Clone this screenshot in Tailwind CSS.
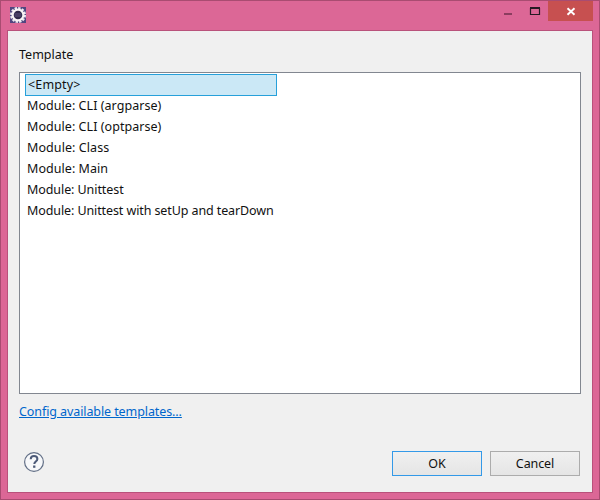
<!DOCTYPE html>
<html lang="en">
<head>
<meta charset="utf-8">
<title>Template</title>
<script src="https://cdn.jsdelivr.net/npm/@tailwindcss/browser@4"></script>
</head>
<body class="w-[600px] h-[500px] overflow-hidden font-['Noto_Sans','Open_Sans',sans-serif] text-[12.5px] text-[#111]">
<div class="w-[600px] h-[500px] bg-[#dc6796] border border-[#a94c71] flex flex-col px-[6px] pb-[6px]">
  <header class="h-[29px] shrink-0 flex items-start -mr-[6px]">
    <svg class="mt-[6px] ml-[3px]" width="16" height="16" viewBox="0 0 16 16">
      <rect width="16" height="16" fill="#51457f"/>
      <circle cx="8" cy="8" r="6.9" fill="none" stroke="#eeeaf0" stroke-width="2.2" stroke-dasharray="2.4 1.21"/>
      <circle cx="8" cy="8" r="5.4" fill="#302849" stroke="#f8f4f5" stroke-width="2.2"/>
      <path d="M4.5 7h7M4.5 9h7" stroke="#6c618d" stroke-width=".8"/>
    </svg>
    <div class="ml-auto flex">
      <svg width="56" height="20" viewBox="0 0 56 20">
        <path d="M12 13h8" stroke="#8b3d5f" stroke-width="2"/>
        <path d="M38.5 7v6.5h9V7" fill="none" stroke="#251a23" stroke-width="1.2"/>
        <path d="M38 7h10" stroke="#251a23" stroke-width="2"/>
      </svg>
      <div class="w-[45px] h-[20px] bg-[#c75050] mr-[6px]">
        <svg width="45" height="20" viewBox="0 0 45 20"><path d="M19.5 7.3l7 6.4M26.5 7.3l-7 6.4" stroke="#fff" stroke-width="1.9"/></svg>
      </div>
    </div>
  </header>
  <main class="flex-1 bg-[#f0f0f0] border border-[#b9527b] flex flex-col px-[11px]">
    <div class="h-[41px] pt-[15px] leading-[18px]">Template</div>
    <div class="h-[322px] shrink-0 bg-white border border-[#828790] pl-[5px] pt-px flex flex-col items-start whitespace-nowrap">
      <div class="w-[252px] h-[22px] border border-[#26a0da] bg-[#cbe8f6] pl-[2px] leading-[20px] tracking-[0.15px]">&lt;Empty&gt;</div>
      <div class="h-[21px] pl-[2px] leading-[20px] tracking-[0.05px]">Module: CLI (argparse)</div>
      <div class="h-[21px] pl-[2px] leading-[20px] tracking-[0.05px]">Module: CLI (optparse)</div>
      <div class="h-[21px] pl-[2px] leading-[20px] tracking-[0.08px]">Module: Class</div>
      <div class="h-[21px] pl-[2px] leading-[20px] tracking-[0.05px]">Module: Main</div>
      <div class="h-[21px] pl-[2px] leading-[20px] tracking-[-0.08px]">Module: Unittest</div>
      <div class="h-[21px] pl-[2px] leading-[20px] tracking-[-0.1px]">Module: Unittest with setUp and tearDown</div>
    </div>
    <a class="mt-[9px] leading-[18px] text-[#0066cc] underline self-start tracking-[-0.09px]">Config available templates...</a>
    <div class="mt-[30px] flex items-start">
      <svg class="ml-[4px]" width="22" height="22" viewBox="0 0 22 22">
        <circle cx="11" cy="11" r="9.4" fill="#f7f8fa" stroke="#626f86" stroke-width="1.2"/>
        <path d="M7.7 8.2C7.8 5.9 9.2 5 11 5c2 0 3.4 1.1 3.4 2.9 0 2.5-3.1 2.6-3.1 5" fill="none" stroke="#4d5a78" stroke-width="2"/>
        <rect x="10.1" y="14.5" width="2.3" height="2.3" fill="#4d5a78"/>
      </svg>
      <div class="ml-auto mr-px flex gap-[8px]">
        <button class="w-[90px] h-[25px] border border-[#3399e8] bg-linear-to-b from-[#f0f0f0] to-[#e5e5e5] leading-[23px]">OK</button>
        <button class="w-[90px] h-[25px] border border-[#acacac] bg-linear-to-b from-[#f0f0f0] to-[#e5e5e5] leading-[23px] tracking-[-0.1px]">Cancel</button>
      </div>
    </div>
  </main>
</div>
</body>
</html>
